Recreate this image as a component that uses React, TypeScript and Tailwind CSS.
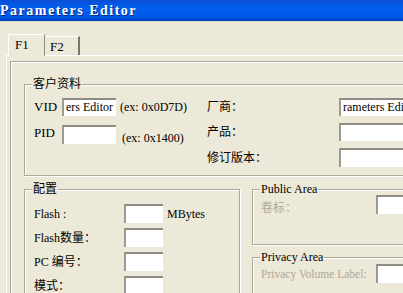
import React from 'react'

type BoxProps = {
  label: string
  className?: string
  children?: React.ReactNode
}

const GroupBox = ({ label, className, children }: BoxProps) => {
  return (
    <div className={`relative shrink-0 border border-[#aca899] shadow-[inset_1px_1px_0_#fff,1px_1px_0_#fff] ${className}`}>
      <span className="absolute left-[7px] top-[-8px] h-[14px] px-[1px] bg-[#ece9d8] text-[12px] leading-[14px] text-black whitespace-nowrap">
        {label}
      </span>
      {children}
    </div>
  )
}

const Field = ({ value, className }: { value?: string, className?: string }) => {
  return (
    <div className={`shrink-0 overflow-hidden whitespace-nowrap bg-white border-t-2 border-l-2 border-t-[#8d8b82] border-l-[#9c9a91] pl-[2px] text-[12px] leading-[15px] text-black ${className}`}>
      {value}
    </div>
  )
}

const App = () => {
  return (
    <div className="w-[403px] h-[293px] overflow-hidden bg-[#ece9d8] flex flex-col font-['Liberation_Serif','Noto_Sans_CJK_SC',serif] text-[12px] text-black">
      {/* title bar */}
      <div className="h-[22px] shrink-0 flex items-center bg-[linear-gradient(180deg,#0a4fd6_0%,#0060f0_40%,#0058ea_80%,#003fbf_100%)] border-b border-b-[#dcdad0]">
        <span className="text-white font-bold text-[14px] tracking-[1.5px] leading-none [text-shadow:1px_1px_#0a2a8a]">Parameters Editor</span>
      </div>

      <div className="pt-[12px] pl-[6px]">
        {/* tabs */}
        <div className="relative z-10 flex items-end pl-[2px] h-[22px]">
          <div className="w-[37px] h-[22px] bg-[#ece9d8] border-t border-l border-white border-r border-r-[#8e8c83] rounded-tl-[2px] flex items-center pl-[6px] text-[13px] pb-[1px]">
            F1
          </div>
          <div className="w-[35px] h-[19px] mb-[1px] bg-[#ece9d8] border-t border-white border-r-2 border-r-[#77756c] flex items-center pl-[5px] text-[13px] pt-[2px]">
            F2
          </div>
        </div>

        {/* tab page */}
        <div className="-mt-px border-t border-l border-white pt-[5px] pl-[3px]">
          <div className="border-t border-l border-[#aca899] shadow-[inset_1px_1px_0_#fff] pt-[22px] pl-[13px] h-[300px] overflow-hidden">
            {/* 客户资料 */}
            <GroupBox label="客户资料" className="w-[420px] h-[92px]">
              <div className="flex pt-[13px]">
                <div className="w-[182px] shrink-0 pl-[9px] flex flex-col">
                  <div className="h-[18px] flex items-center">
                    <span className="w-[28px] shrink-0 text-[13px]">VID</span>
                    <Field value="ers Editor" className="w-[54px] h-[18px]" />
                    <span className="ml-[4px] whitespace-nowrap">(ex: 0x0D7D)</span>
                  </div>
                  <div className="h-[19px] mt-[9px] flex items-center">
                    <span className="w-[28px] shrink-0 text-[13px] -mt-[3px]">PID</span>
                    <Field className="w-[54px] h-[19px]" />
                    <span className="ml-[6px] mt-[7px] whitespace-nowrap">(ex: 0x1400)</span>
                  </div>
                </div>
                <div className="flex flex-col gap-[7px]">
                  <div className="h-[18px] flex items-center">
                    <span className="w-[132px] shrink-0">厂商：</span>
                    <Field value="rameters Editor" className="w-[80px] h-[18px]" />
                  </div>
                  <div className="h-[18px] flex items-center">
                    <span className="w-[132px] shrink-0">产品：</span>
                    <Field className="w-[80px] h-[18px]" />
                  </div>
                  <div className="h-[19px] flex items-center">
                    <span className="w-[132px] shrink-0">修订版本：</span>
                    <Field className="w-[80px] h-[19px]" />
                  </div>
                </div>
              </div>
            </GroupBox>

            <div className="flex mt-[13px] w-[440px]">
              {/* 配置 */}
              <GroupBox label="配置" className="w-[216px] h-[140px]">
                <div className="pt-[14px] pl-[9px] flex flex-col gap-[5px]">
                  <div className="h-[19px] flex items-center">
                    <span className="w-[90px] shrink-0">Flash :</span>
                    <Field className="w-[39px] h-[19px]" />
                    <span className="ml-[4px]">MBytes</span>
                  </div>
                  <div className="h-[19px] flex items-center">
                    <span className="w-[90px] shrink-0">Flash数量：</span>
                    <Field className="w-[39px] h-[19px]" />
                  </div>
                  <div className="h-[19px] flex items-center">
                    <span className="w-[90px] shrink-0">PC 编号：</span>
                    <Field className="w-[39px] h-[19px]" />
                  </div>
                  <div className="h-[19px] flex items-center">
                    <span className="w-[90px] shrink-0">模式：</span>
                    <Field className="w-[39px] h-[19px]" />
                  </div>
                </div>
              </GroupBox>

              <div className="ml-[12px] shrink-0 flex flex-col">
                <GroupBox label="Public Area" className="w-[200px] h-[56px]">
                  <div className="pt-[5px] pl-[8px] h-[19px] flex items-center box-content">
                    <span className="w-[115px] shrink-0 text-[#aca899] mt-[6px]">卷标：</span>
                    <Field className="w-[40px] h-[19px]" />
                  </div>
                </GroupBox>
                <GroupBox label="Privacy Area" className="w-[200px] h-[60px] mt-[12px]">
                  <div className="pt-[6px] pl-[8px] h-[19px] flex items-center box-content">
                    <span className="w-[115px] shrink-0 text-[#aca899] text-[11.5px] whitespace-nowrap mt-[3px]">Privacy Volume Label:</span>
                    <Field className="w-[40px] h-[19px]" />
                  </div>
                </GroupBox>
              </div>
            </div>
          </div>
        </div>
      </div>
    </div>
  )
}

export default App
